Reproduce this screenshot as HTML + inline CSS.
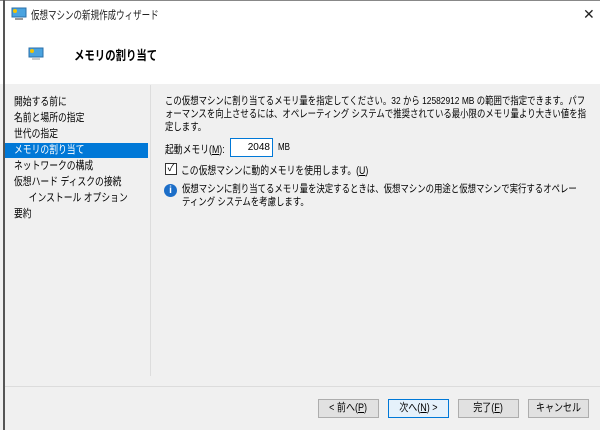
<!DOCTYPE html>
<html><head><meta charset="utf-8"><style>
*{margin:0;padding:0;box-sizing:border-box}
body{width:600px;height:430px;overflow:hidden;background:#f0f0f0;font-family:"Liberation Sans","Noto Sans CJK JP",sans-serif;font-size:11px;color:#000;position:relative}
.a{position:absolute;white-space:nowrap}
.s{transform:scaleX(.8);transform-origin:0 0}
.b{position:absolute;height:19px;background:#e1e1e1;border:1px solid #adadad;text-align:center;line-height:17px;width:61px;overflow:hidden}
.b span{display:inline-block;transform:scaleX(.82)}
</style></head><body>
<div class="a" style="left:0;top:0;width:600px;height:84px;background:#fff"></div>
<div class="a" style="left:0;top:0;width:600px;height:1px;background:#888"></div>
<div class="a" style="left:3px;top:0;width:2px;height:430px;background:#555"></div>
<svg class="a" style="left:11px;top:7px" width="16" height="14"><rect x="1" y="1" width="14" height="9" fill="#4aa3df" stroke="#2a6fa8"/><circle cx="4" cy="4" r="2" fill="#f5c400"/><rect x="4" y="11" width="8" height="2" fill="#999"/></svg>
<div class="a s" style="left:31px;top:7px;font-size:11.5px;color:#222;transform:scaleX(.74)">仮想マシンの新規作成ウィザード</div>
<div class="a" style="left:583px;top:6px;font-size:14px;color:#222">✕</div>
<svg class="a" style="left:28px;top:47px" width="16" height="14"><rect x="1" y="1" width="14" height="9" fill="#4aa3df" stroke="#2a6fa8"/><circle cx="4" cy="4" r="2" fill="#f5c400"/><rect x="4" y="11" width="8" height="2" fill="#ccc"/></svg>
<div class="a s" style="left:74px;top:45px;font-size:13px;font-weight:bold">メモリの割り当て</div>
<div class="a" style="left:150px;top:85px;width:1px;height:291px;background:#ddd"></div>
<div class="a" style="left:5px;top:386px;width:595px;height:1px;background:#dcdcdc"></div>
<div class="a" style="left:5px;top:143px;width:143px;height:15px;background:#0078d7"></div>
<div class="a s" style="left:14px;top:94px;line-height:16px">開始する前に<br>名前と場所の指定<br>世代の指定<br><span style="color:#fff">メモリの割り当て</span><br>ネットワークの構成<br>仮想ハード ディスクの接続<br>&nbsp;&nbsp;&nbsp;&nbsp;&nbsp;&nbsp;インストール オプション<br>要約</div>
<div class="a s" style="left:165px;top:95px;line-height:13px;font-size:10.5px">この仮想マシンに割り当てるメモリ量を指定してください。32 から 12582912 MB の範囲で指定できます。パフ<br>ォーマンスを向上させるには、オペレーティング システムで推奨されている最小限のメモリ量より大きい値を指<br>定します。</div>
<div class="a s" style="left:165px;top:141px">起動メモリ(<u>M</u>):</div>
<div class="a" style="left:230px;top:138px;width:43px;height:19px;background:#fff;border:1px solid #0078d7;text-align:right;padding:3px 2px 0 0;font-size:10px">2048</div>
<div class="a s" style="left:278px;top:142px;font-size:10px">MB</div>
<div class="a" style="left:165px;top:163px;width:12px;height:12px;border:1px solid #333;background:#fff;font-size:10px;line-height:10px;text-align:center">✓</div>
<div class="a s" style="left:181px;top:162px">この仮想マシンに動的メモリを使用します。(<u>U</u>)</div>
<div class="a" style="left:164px;top:184px;width:13px;height:13px;border-radius:50%;background:#1c6ec8;color:#fff;font-weight:bold;font-size:10px;line-height:13px;text-align:center">i</div>
<div class="a s" style="left:182px;top:183px;line-height:13px;font-size:10.5px">仮想マシンに割り当てるメモリ量を決定するときは、仮想マシンの用途と仮想マシンで実行するオペレー<br>ティング システムを考慮します。</div>
<div class="b" style="left:318px;top:399px"><span>&lt; 前へ(<u>P</u>)</span></div>
<div class="b" style="left:388px;top:399px;background:#e5f1fb;border-color:#0078d7"><span>次へ(<u>N</u>) &gt;</span></div>
<div class="b" style="left:458px;top:399px"><span>完了(<u>F</u>)</span></div>
<div class="b" style="left:528px;top:399px"><span>キャンセル</span></div>
</body></html>
